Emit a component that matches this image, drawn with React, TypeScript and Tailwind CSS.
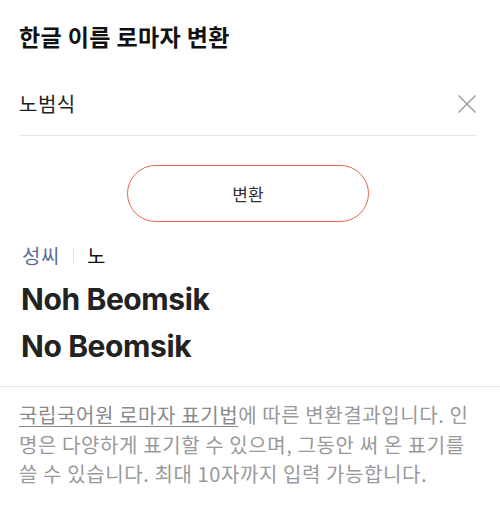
export default function App() {
  return (
    <div className="w-[500px] h-[510px] bg-white font-['Noto_Sans_CJK_KR',sans-serif] text-[#222]">
      <div className="pl-[19px] pr-[23px] pt-[20px]">
        <h1 className="text-[23px] font-bold leading-[32px] tracking-[0.4px] text-[#111]">한글 이름 로마자 변환</h1>
        <div className="mt-[37px] flex items-center justify-between border-b border-[#e6e6e6] pb-[16px]">
          <span className="text-[20px] leading-[30px] tracking-[0.5px] text-[#222]">노범식</span>
          <svg width="20" height="20" viewBox="0 0 20 20">
            <path d="M1.5 1.5 L18.5 18.5 M18.5 1.5 L1.5 18.5" stroke="#999" strokeWidth="1.4" fill="none" />
          </svg>
        </div>
        <div className="mt-[29px] flex justify-center">
          <button className="w-[242px] h-[57px] rounded-full border-[1.5px] border-[#e8664f] text-[17px] text-[#333] bg-white">
            변환
          </button>
        </div>
        <div className="mt-[19px] ml-[3px] flex items-center text-[20px] leading-[30px] tracking-[0.6px]">
          <span className="text-[#5b6e96]">성씨</span>
          <span className="mx-[13px] h-[17px] w-px bg-[#e3e3e3]" />
          <span className="text-[#111]">노</span>
        </div>
        <div className="ml-[2px] mt-[5px] font-['Inter',sans-serif] font-bold text-[30px] leading-[47px] tracking-[-0.4px] text-[#222]">
          <div>Noh Beomsik</div>
          <div>No Beomsik</div>
        </div>
      </div>
      <div className="mt-[16px] border-t border-[#e6e6e6] px-[19px] pt-[13px]">
        <p className="text-[20px] leading-[29.5px] text-[#999] tracking-[0.6px]">
          <span className="underline underline-offset-[3px] decoration-[1px] decoration-[#888] text-[#8a8a8a]">국립국어원 로마자 표기법</span>에 따른 변환결과입니다. 인명은 다양하게 표기할 수 있으며, 그동안 써 온 표기를 쓸 수 있습니다. 최대 10자까지 입력 가능합니다.
        </p>
      </div>
    </div>
  );
}
